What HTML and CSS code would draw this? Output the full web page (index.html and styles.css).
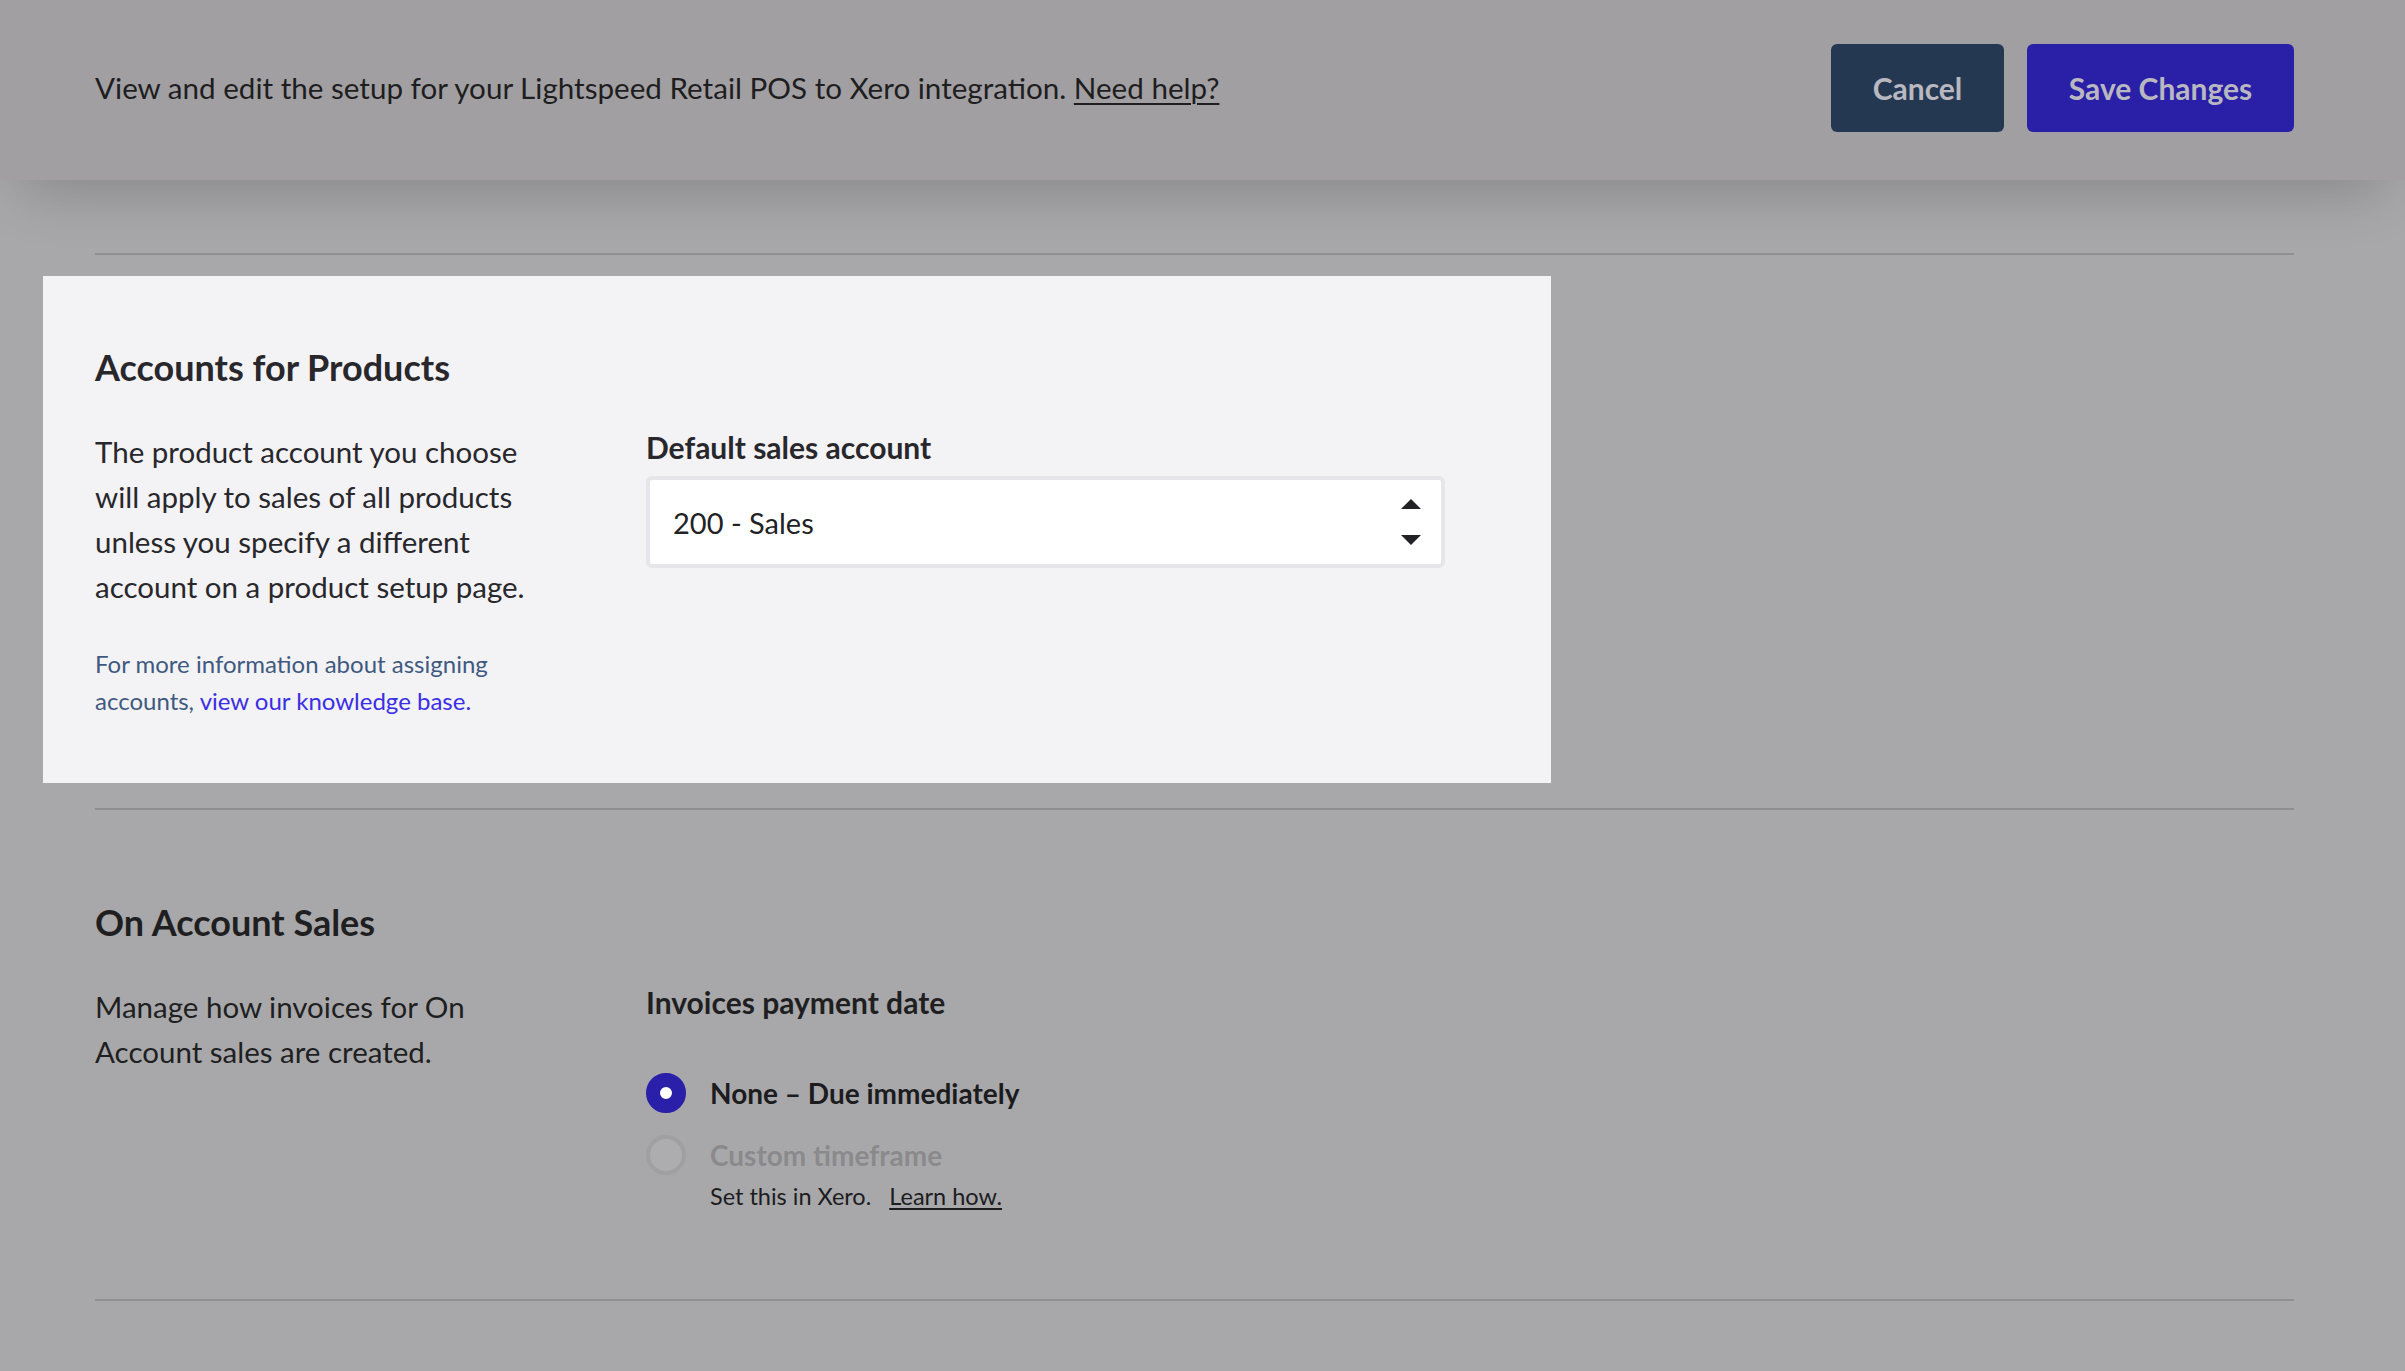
FILE: index.html
```html
<!DOCTYPE html>
<html lang="en">
<head>
    <meta charset="UTF-8">
    <meta name="viewport" content="width=device-width, initial-scale=1.0">
    <title>Lightspeed Retail POS to Xero - Setup</title>
    <link rel="stylesheet" href="styles.css">
</head>
<body>
    <header class="topbar">
        <p class="intro">View and edit the setup for your Lightspeed Retail POS to Xero integration. <a href="#">Need help?</a></p>
        <div class="actions">
            <button class="btn btn-cancel">Cancel</button>
            <button class="btn btn-save">Save Changes</button>
        </div>
    </header>

    <main class="content">
        <hr class="divider">

        <!-- Zvýrazněná sekce (průvodce) -->
        <section class="setup-section is-highlighted">
            <h2>Accounts for Products</h2>
            <div class="section-body">
                <div class="section-info">
                    <p class="lead">The product account you choose will apply to sales of all products unless you specify a different account on a product setup page.</p>
                    <p class="note">For more information about assigning accounts, <a href="#">view our knowledge base.</a></p>
                </div>
                <div class="section-field">
                    <label class="field-label" for="sales-account">Default sales account</label>
                    <div class="select" id="sales-account">
                        <span>200 - Sales</span>
                        <svg class="select-arrows" width="20" height="46" viewBox="0 0 20 46">
                            <polygon points="10,0 20,10 0,10" fill="#222226"/>
                            <polygon points="0,36 20,36 10,46" fill="#222226"/>
                        </svg>
                    </div>
                </div>
            </div>
        </section>

        <hr class="divider">

        <section class="setup-section">
            <h2>On Account Sales</h2>
            <div class="section-body">
                <div class="section-info">
                    <p class="lead">Manage how invoices for On Account sales are created.</p>
                </div>
                <div class="section-field">
                    <div class="field-label">Invoices payment date</div>
                    <div class="radio-list">
                        <div class="radio-row">
                            <span class="radio checked"></span>
                            <span class="radio-label">None – Due immediately</span>
                        </div>
                        <div class="radio-row disabled">
                            <span class="radio"></span>
                            <span class="radio-label">Custom timeframe</span>
                        </div>
                        <p class="radio-hint">Set this in Xero. <a href="#">Learn how.</a></p>
                    </div>
                </div>
            </div>
        </section>

        <hr class="divider">
    </main>
</body>
</html>
```

FILE: styles.css
```css
* {
    margin: 0;
    padding: 0;
    box-sizing: border-box;
}

body {
    font-family: Lato, 'Open Sans', sans-serif;
    background-color: #a8a8aa;
    color: #1f1f22;
    min-height: 100vh;
}

a {
    color: inherit;
}

/* Horní lišta */
.topbar {
    position: relative;
    z-index: 1;
    height: 180px;
    display: flex;
    align-items: center;
    justify-content: space-between;
    padding: 0 111px 0 95px;
    background-color: #a19fa2;
    box-shadow: 0 30px 60px -20px rgba(0, 0, 0, 0.2);
}

.intro {
    font-size: 29.6px;
    color: #1e1e21;
    margin-bottom: 5px;
}

.intro a {
    text-decoration-thickness: 2px;
    text-underline-offset: 4px;
}

.actions {
    display: flex;
    gap: 23px;
    margin-bottom: 4px;
}

.btn {
    height: 88px;
    border: none;
    border-radius: 6px;
    font-family: inherit;
    font-size: 30px;
    font-weight: 700;
    color: #b9b8c0;
    cursor: pointer;
}

.btn-cancel {
    width: 173px;
    background-color: #253852;
}

.btn-save {
    width: 267px;
    background-color: #2a20a8;
}

/* Obsah */
.content {
    padding: 73px 111px 0 95px;
}

.divider {
    border: none;
    height: 2px;
    background-color: #8f8e91;
}

.setup-section {
    margin: 21px 0 23px;
    padding: 70px 0 63px;
}

.setup-section.is-highlighted {
    position: relative;
    width: max-content;
    margin-bottom: 25px;
    margin-left: -52px;
    padding: 70px 106px 64px 52px;
    background-color: #f3f2f5;
    color: #28282c;
}

.setup-section h2 {
    font-size: 36px;
    font-weight: 700;
    line-height: 1.2;
    margin-bottom: 40px;
}

.section-body {
    display: grid;
    grid-template-columns: 450px 799px;
    column-gap: 101px;
}

.lead {
    font-size: 29.5px;
    line-height: 45px;
}

.note {
    margin-top: 36px;
    font-size: 24px;
    line-height: 37px;
    color: #3f5a80;
}

.note a {
    color: #3a2ee6;
    text-decoration: none;
}

.field-label {
    display: block;
    font-size: 30px;
    font-weight: 700;
    line-height: 36px;
}

.select {
    display: flex;
    align-items: center;
    justify-content: space-between;
    height: 92px;
    margin-top: 11px;
    padding: 0 20px 0 23px;
    background-color: #fff;
    border: 4px solid #e6e5e9;
    border-radius: 6px;
    font-size: 29px;
    color: #222226;
}

.radio-list {
    margin-top: 53px;
}

.radio-row {
    display: flex;
    align-items: center;
    gap: 24px;
    height: 40px;
}

.radio-row + .radio-row {
    margin-top: 22px;
}

.radio {
    width: 40px;
    height: 40px;
    border-radius: 50%;
    border: 4px solid #a0a0a2;
    background-color: #adadaf;
}

.radio.checked {
    border: 14px solid #2a1fa8;
    background-color: #fff;
}

.radio-label {
    font-size: 28px;
    font-weight: 700;
    color: #1c1c1f;
}

.radio-row.disabled .radio-label {
    color: #8a8a8c;
}

.radio-hint {
    margin-top: 5px;
    padding-left: 64px;
    font-size: 23.5px;
    line-height: 33px;
    color: #1c1c1f;
}

.radio-hint a {
    margin-left: 12px;
    text-underline-offset: 3px;
}
```
